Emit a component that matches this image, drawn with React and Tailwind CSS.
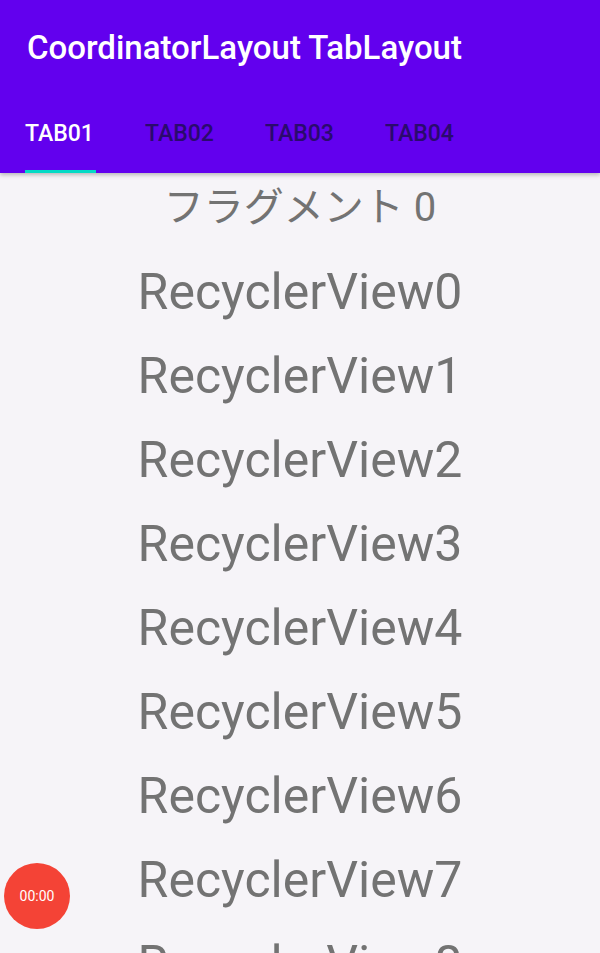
const rows = Array.from({ length: 9 }, (_, i) => `RecyclerView${i}`);
const tabs = ["TAB01", "TAB02", "TAB03", "TAB04"];

export default function App() {
  return (
    <div
      className="relative h-[953px] w-[600px] overflow-hidden bg-[#f6f4f8]"
      style={{ fontFamily: "Roboto, 'Noto Sans CJK JP', sans-serif" }}
    >
      {/* App bar */}
      <header className="relative z-10 h-[173px] bg-[#6200ee] shadow-[0_2px_4px_rgba(0,0,0,0.25)]">
        <div className="flex h-[96px] items-center pl-[27px]">
          <h1 className="text-[33px] font-medium text-white">CoordinatorLayout TabLayout</h1>
        </div>
        <nav className="flex h-[77px]">
          {tabs.map((t, i) => (
            <div key={t} className="relative flex w-[120px] items-center pl-[25px]">
              <span
                className={`text-[23px] font-medium ${i === 0 ? "text-white" : "text-[#2a0a6e]"}`}
              >
                {t}
              </span>
              {i === 0 && (
                <div className="absolute bottom-0 left-[25px] h-[3px] w-[71px] bg-[#03dac5]" />
              )}
            </div>
          ))}
        </nav>
      </header>

      {/* Fragment content */}
      <main className="flex flex-col items-center text-[#737373]">
        <p className="mt-[10px] text-[40px] leading-[50px]">フラグメント 0</p>
        <ul className="mt-[17px] flex flex-col items-center">
          {rows.map((r) => (
            <li key={r} className="h-[84px] text-[50px] leading-[84px]">
              {r}
            </li>
          ))}
        </ul>
      </main>

      {/* Timer FAB */}
      <div className="absolute left-[4px] top-[863px] flex h-[66px] w-[66px] items-center justify-center rounded-full bg-[#f44336]">
        <span className="text-[14px] text-white">00:00</span>
      </div>
    </div>
  );
}
